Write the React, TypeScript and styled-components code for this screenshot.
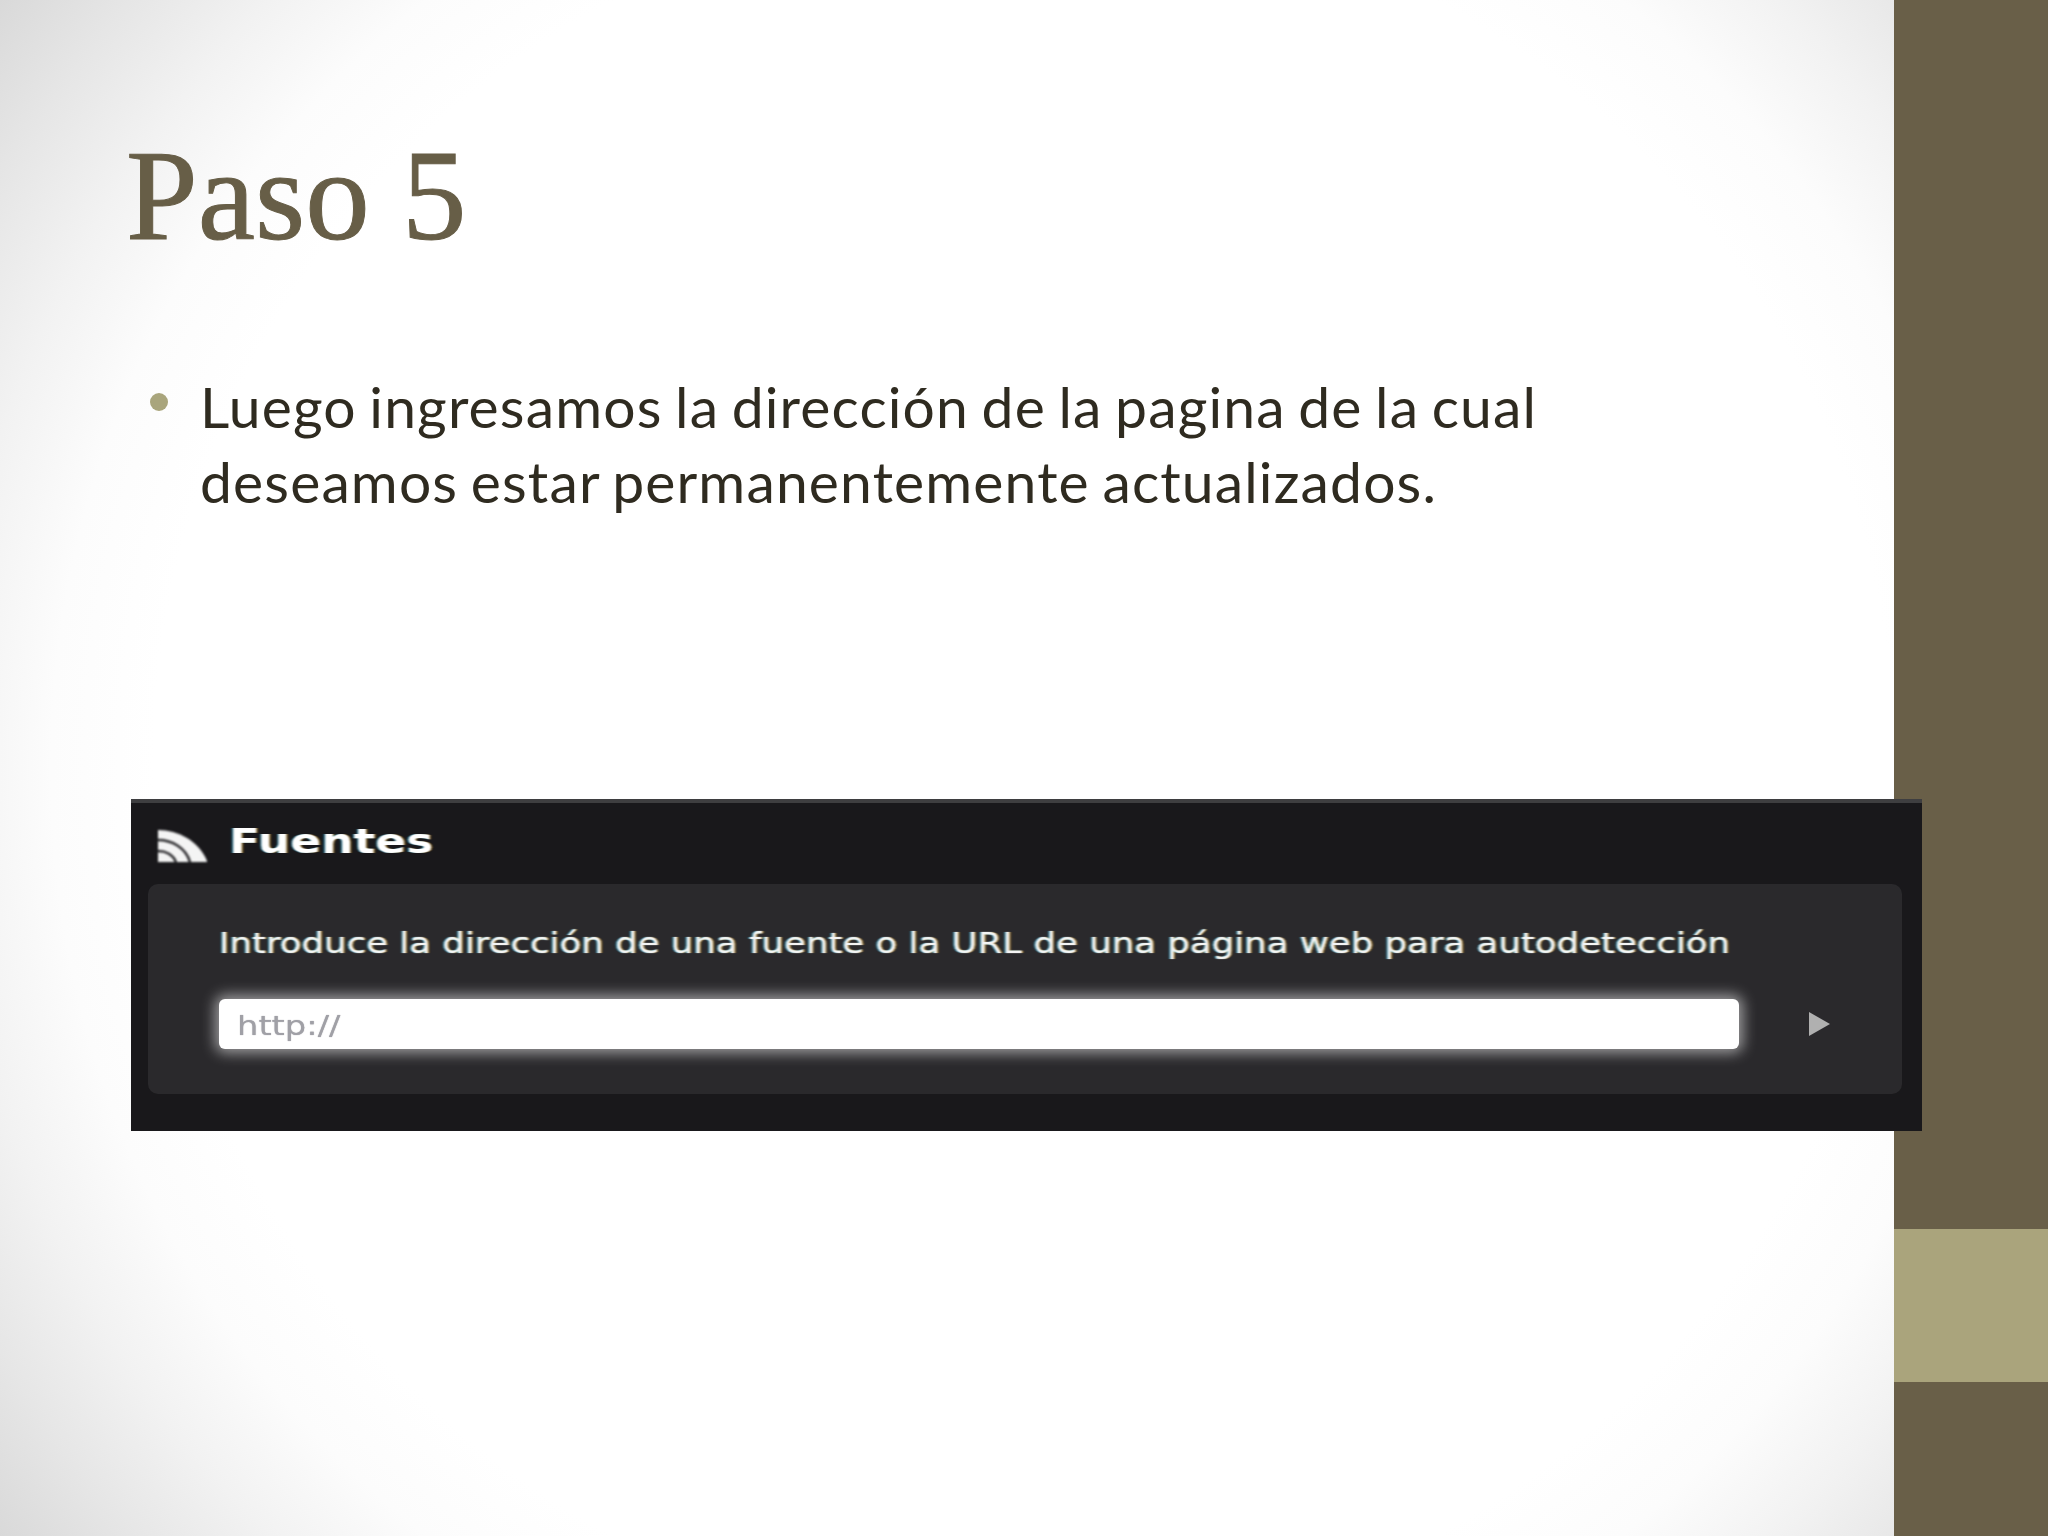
import styled, { createGlobalStyle } from "styled-components";

const GlobalStyle = createGlobalStyle`
  html, body {
    margin: 0;
    padding: 0;
  }
`;

const Slide = styled.div`
  display: flex;
  width: 2048px;
  height: 1536px;
  overflow: hidden;
  background: radial-gradient(circle 1280px at 50% 50%, #ffffff 68%, #fcfcfc 76%, #f2f2f2 84%, #e6e6e6 92%, #d9d9d9 100%);
`;

const Content = styled.main`
  flex: 1;
  min-width: 0;
  padding: 132px 0 0 126px;
`;

const Title = styled.h1`
  margin: 0;
  height: 128px;
  font-family: "Liberation Serif", serif;
  font-weight: 400;
  font-size: 129px;
  line-height: 128px;
  color: #675e47;
  -webkit-text-stroke: 1px #675e47;
`;

const BulletList = styled.ul`
  list-style: none;
  margin: 109px 0 0;
  padding: 0 0 0 74px;
  position: relative;
  width: 1400px;
`;

const BulletItem = styled.li`
  font-family: Lato, sans-serif;
  font-size: 57px;
  line-height: 75px;
  letter-spacing: 1.15px;
  word-spacing: -3.2px;
  color: #2f2b20;

  &::before {
    content: "";
    position: absolute;
    left: 24px;
    top: 24px;
    width: 18px;
    height: 18px;
    border-radius: 50%;
    background: #a9a57c;
  }
`;

const FeedPanel = styled.section`
  position: relative;
  z-index: 1;
  box-sizing: border-box;
  width: 1791px;
  height: 332px;
  margin: 280px 0 0 5px;
  padding: 0 20px 0 17px;
  background: #19181b;
  border-top: 4px solid #3e3e40;
`;

const PanelHeader = styled.div`
  display: flex;
  align-items: flex-start;
  height: 81px;
  padding: 19px 0 0 10px;
  box-sizing: border-box;
`;

const RssIcon = styled.svg`
  width: 49px;
  height: 34px;
  margin-top: 6px;
  flex: none;
  filter: blur(0.8px);
`;

const PanelTitle = styled.span`
  margin-left: 22px;
  font-family: "DejaVu Sans", sans-serif;
  font-weight: 700;
  font-size: 33px;
  line-height: 40px;
  color: #ffffff;
  transform: scaleX(1.38);
  transform-origin: left center;
  filter: blur(0.6px);
  text-shadow: -1px 0 rgba(0, 190, 255, 0.4), 1px 0 rgba(255, 170, 0, 0.4);
`;

const PanelBody = styled.div`
  box-sizing: border-box;
  height: 210px;
  padding: 41px 0 0 71px;
  background: #2a292c;
  border-radius: 10px;
`;

const Hint = styled.p`
  margin: 0;
  height: 36px;
  width: 1510px;
  white-space: nowrap;
  font-family: "DejaVu Sans", sans-serif;
  font-size: 29px;
  line-height: 36px;
  color: #f4f4f4;
  transform: scaleX(1.226);
  transform-origin: left center;
  filter: blur(0.7px);
  text-shadow: -1px 0 rgba(0, 190, 255, 0.5), 1px 0 rgba(255, 170, 0, 0.5), 0 0 1px #ffffff;
`;

const FieldRow = styled.div`
  display: flex;
  align-items: center;
  margin-top: 38px;
`;

const UrlField = styled.div`
  box-sizing: border-box;
  width: 1520px;
  height: 50px;
  padding: 3px 0 0 18px;
  background: #ffffff;
  border-radius: 6px;
  box-shadow: 0 0 14px 4px rgba(255, 255, 255, 0.55);
  font-family: "DejaVu Sans", sans-serif;
  font-size: 27px;
  line-height: 47px;
  color: #a0a0a6;
`;

const UrlText = styled.span`
  display: inline-block;
  transform: scaleX(1.25);
  transform-origin: left center;
  filter: blur(0.6px);
  text-shadow: 0 0 1px #a0a0a6;
`;

const GoArrow = styled.svg`
  width: 22px;
  height: 24px;
  margin-left: 69px;
  flex: none;
  filter: blur(0.4px);
`;

const Sidebar = styled.aside`
  display: flex;
  flex-direction: column;
  flex: none;
  width: 154px;
  height: 100%;
`;

const SideBlock = styled.div<{ $size: number; $accent?: boolean }>`
  height: ${(p) => p.$size}px;
  background: ${(p) => (p.$accent ? "#aaa47c" : "#695f48")};
`;

export default function App() {
  return (
    <>
      <GlobalStyle />
      <Slide>
        <Content>
          <Title>Paso 5</Title>
          <BulletList>
            <BulletItem>
              Luego ingresamos la dirección de la pagina de la cual deseamos estar permanentemente actualizados.
            </BulletItem>
          </BulletList>
          <FeedPanel>
            <PanelHeader>
              <RssIcon viewBox="0 0 49 34" preserveAspectRatio="none">
                <path d="M0 2C20 2 41 13 49 33L49 34L0 34Z" fill="#f4f4f4" />
                <path d="M0 12C14 12 28 20 32 34" fill="none" stroke="#2a292c" strokeWidth="2.5" />
                <path d="M0 23C8 23 15 27 18 34" fill="none" stroke="#2a292c" strokeWidth="2.5" />
              </RssIcon>
              <PanelTitle>Fuentes</PanelTitle>
            </PanelHeader>
            <PanelBody>
              <Hint>Introduce la dirección de una fuente o la URL de una página web para autodetección</Hint>
              <FieldRow>
                <UrlField>
                  <UrlText>http://</UrlText>
                </UrlField>
                <GoArrow viewBox="0 0 22 24">
                  <path d="M1 0L22 12L1 24Z" fill="#b0b0b0" />
                </GoArrow>
              </FieldRow>
            </PanelBody>
          </FeedPanel>
        </Content>
        <Sidebar>
          <SideBlock $size={1229} />
          <SideBlock $size={153} $accent />
          <SideBlock $size={154} />
        </Sidebar>
      </Slide>
    </>
  );
}
